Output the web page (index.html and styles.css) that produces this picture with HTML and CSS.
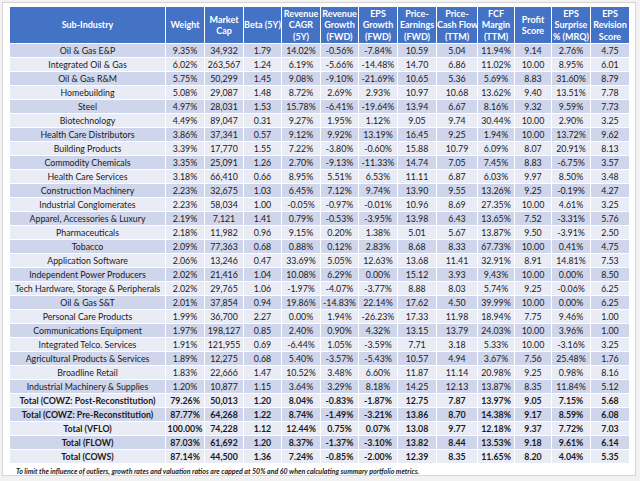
FILE: index.html
```html
<!DOCTYPE html>
<html>
<head>
<meta charset="utf-8">
<link rel="stylesheet" href="styles.css">
</head>
<body>
<div class="panel">
<table class="metrics">
<colgroup><col class="w156"><col class="w39"><col class="w39"><col class="w38"><col class="w39"><col class="w38"><col class="w39"><col class="w39"><col class="w41"><col class="w37"><col class="w37"><col class="w39"><col class="w38"></colgroup>
<thead>
<tr>
<th>Sub-Industry</th><th>Weight</th><th>Market<br>Cap</th><th>Beta (5Y)</th><th>Revenue<br>CAGR<br>(5Y)</th><th>Revenue<br>Growth<br>(FWD)</th><th>EPS<br>Growth<br>(FWD)</th><th>Price-<br>Earnings<br>(FWD)</th><th>Price-<br>Cash Flow<br>(TTM)</th><th>FCF<br>Margin<br>(TTM)</th><th>Profit<br>Score</th><th>EPS<br>Surprise<br>% (MRQ)</th><th>EPS<br>Revision<br>Score</th>
</tr>
</thead>
<tbody>
<tr><td>Oil &amp; Gas E&amp;P</td><td>9.35%</td><td>34,932</td><td>1.79</td><td>14.02%</td><td>-0.56%</td><td>-7.84%</td><td>10.59</td><td>5.04</td><td>11.94%</td><td>9.14</td><td>2.76%</td><td>4.75</td></tr>
<tr><td>Integrated Oil &amp; Gas</td><td>6.02%</td><td>263,567</td><td>1.24</td><td>6.19%</td><td>-5.66%</td><td>-14.48%</td><td>14.70</td><td>6.86</td><td>11.02%</td><td>10.00</td><td>8.95%</td><td>6.01</td></tr>
<tr><td>Oil &amp; Gas R&amp;M</td><td>5.75%</td><td>50,299</td><td>1.45</td><td>9.08%</td><td>-9.10%</td><td>-21.69%</td><td>10.65</td><td>5.36</td><td>5.69%</td><td>8.83</td><td>31.60%</td><td>8.79</td></tr>
<tr><td>Homebuilding</td><td>5.08%</td><td>29,087</td><td>1.48</td><td>8.72%</td><td>2.69%</td><td>2.93%</td><td>10.97</td><td>10.68</td><td>13.62%</td><td>9.40</td><td>13.51%</td><td>7.78</td></tr>
<tr><td>Steel</td><td>4.97%</td><td>28,031</td><td>1.53</td><td>15.78%</td><td>-6.41%</td><td>-19.64%</td><td>13.94</td><td>6.67</td><td>8.16%</td><td>9.32</td><td>9.59%</td><td>7.73</td></tr>
<tr><td>Biotechnology</td><td>4.49%</td><td>89,047</td><td>0.31</td><td>9.27%</td><td>1.95%</td><td>1.12%</td><td>9.05</td><td>9.74</td><td>30.44%</td><td>10.00</td><td>2.90%</td><td>3.25</td></tr>
<tr><td>Health Care Distributors</td><td>3.86%</td><td>37,341</td><td>0.57</td><td>9.12%</td><td>9.92%</td><td>13.19%</td><td>16.45</td><td>9.25</td><td>1.94%</td><td>10.00</td><td>13.72%</td><td>9.62</td></tr>
<tr><td>Building Products</td><td>3.39%</td><td>17,770</td><td>1.55</td><td>7.22%</td><td>-3.80%</td><td>-0.60%</td><td>15.88</td><td>10.79</td><td>6.09%</td><td>8.07</td><td>20.91%</td><td>8.13</td></tr>
<tr><td>Commodity Chemicals</td><td>3.35%</td><td>25,091</td><td>1.26</td><td>2.70%</td><td>-9.13%</td><td>-11.33%</td><td>14.74</td><td>7.05</td><td>7.45%</td><td>8.83</td><td>-6.75%</td><td>3.57</td></tr>
<tr><td>Health Care Services</td><td>3.18%</td><td>66,410</td><td>0.66</td><td>8.95%</td><td>5.51%</td><td>6.53%</td><td>11.11</td><td>6.87</td><td>6.03%</td><td>9.97</td><td>8.50%</td><td>3.48</td></tr>
<tr><td>Construction Machinery</td><td>2.23%</td><td>32,675</td><td>1.03</td><td>6.45%</td><td>7.12%</td><td>9.74%</td><td>13.90</td><td>9.55</td><td>13.26%</td><td>9.25</td><td>-0.19%</td><td>4.27</td></tr>
<tr><td>Industrial Conglomerates</td><td>2.23%</td><td>58,034</td><td>1.00</td><td>-0.05%</td><td>-0.97%</td><td>-0.01%</td><td>10.96</td><td>8.69</td><td>27.35%</td><td>10.00</td><td>4.61%</td><td>3.25</td></tr>
<tr><td>Apparel, Accessories &amp; Luxury</td><td>2.19%</td><td>7,121</td><td>1.41</td><td>0.79%</td><td>-0.53%</td><td>-3.95%</td><td>13.98</td><td>6.43</td><td>13.65%</td><td>7.52</td><td>-3.31%</td><td>5.76</td></tr>
<tr><td>Pharmaceuticals</td><td>2.18%</td><td>11,982</td><td>0.96</td><td>9.15%</td><td>0.20%</td><td>1.38%</td><td>5.01</td><td>5.67</td><td>13.87%</td><td>9.50</td><td>-3.91%</td><td>2.50</td></tr>
<tr><td>Tobacco</td><td>2.09%</td><td>77,363</td><td>0.68</td><td>0.88%</td><td>0.12%</td><td>2.83%</td><td>8.68</td><td>8.33</td><td>67.73%</td><td>10.00</td><td>0.41%</td><td>4.75</td></tr>
<tr><td>Application Software</td><td>2.06%</td><td>13,246</td><td>0.47</td><td>33.69%</td><td>5.05%</td><td>12.63%</td><td>13.68</td><td>11.41</td><td>32.91%</td><td>8.91</td><td>14.81%</td><td>7.53</td></tr>
<tr><td>Independent Power Producers</td><td>2.02%</td><td>21,416</td><td>1.04</td><td>10.08%</td><td>6.29%</td><td>0.00%</td><td>15.12</td><td>3.93</td><td>9.43%</td><td>10.00</td><td>0.00%</td><td>8.50</td></tr>
<tr><td>Tech Hardware, Storage &amp; Peripherals</td><td>2.02%</td><td>29,765</td><td>1.06</td><td>-1.97%</td><td>-4.07%</td><td>-3.77%</td><td>8.88</td><td>8.03</td><td>5.74%</td><td>9.25</td><td>-0.06%</td><td>6.25</td></tr>
<tr><td>Oil &amp; Gas S&amp;T</td><td>2.01%</td><td>37,854</td><td>0.94</td><td>19.86%</td><td>-14.83%</td><td>22.14%</td><td>17.62</td><td>4.50</td><td>39.99%</td><td>10.00</td><td>0.00%</td><td>6.25</td></tr>
<tr><td>Personal Care Products</td><td>1.99%</td><td>36,700</td><td>2.27</td><td>0.00%</td><td>1.94%</td><td>-26.23%</td><td>17.33</td><td>11.98</td><td>18.94%</td><td>7.75</td><td>9.46%</td><td>1.00</td></tr>
<tr><td>Communications Equipment</td><td>1.97%</td><td>198,127</td><td>0.85</td><td>2.40%</td><td>0.90%</td><td>4.32%</td><td>13.15</td><td>13.79</td><td>24.03%</td><td>10.00</td><td>3.96%</td><td>1.00</td></tr>
<tr><td>Integrated Telco. Services</td><td>1.91%</td><td>121,955</td><td>0.69</td><td>-6.44%</td><td>1.05%</td><td>-3.59%</td><td>7.71</td><td>3.18</td><td>5.33%</td><td>10.00</td><td>-3.16%</td><td>3.25</td></tr>
<tr><td>Agricultural Products &amp; Services</td><td>1.89%</td><td>12,275</td><td>0.68</td><td>5.40%</td><td>-3.57%</td><td>-5.43%</td><td>10.57</td><td>4.94</td><td>3.67%</td><td>7.56</td><td>25.48%</td><td>1.76</td></tr>
<tr><td>Broadline Retail</td><td>1.83%</td><td>22,666</td><td>1.47</td><td>10.52%</td><td>3.48%</td><td>6.60%</td><td>11.87</td><td>11.14</td><td>20.98%</td><td>9.25</td><td>0.98%</td><td>8.16</td></tr>
<tr><td>Industrial Machinery &amp; Supplies</td><td>1.20%</td><td>10,877</td><td>1.15</td><td>3.64%</td><td>3.29%</td><td>8.18%</td><td>14.25</td><td>12.13</td><td>13.87%</td><td>8.35</td><td>11.84%</td><td>5.12</td></tr>
<tr class="total"><td>Total (COWZ: Post-Reconstitution)</td><td>79.26%</td><td>50,013</td><td>1.20</td><td>8.04%</td><td>-0.83%</td><td>-1.87%</td><td>12.75</td><td>7.87</td><td>13.97%</td><td>9.05</td><td>7.15%</td><td>5.68</td></tr>
<tr class="total"><td>Total (COWZ: Pre-Reconstitution)</td><td>87.77%</td><td>64,268</td><td>1.22</td><td>8.74%</td><td>-1.49%</td><td>-3.21%</td><td>13.86</td><td>8.70</td><td>14.38%</td><td>9.17</td><td>8.59%</td><td>6.08</td></tr>
<tr class="total"><td>Total (VFLO)</td><td>100.00%</td><td>74,228</td><td>1.12</td><td>12.44%</td><td>0.75%</td><td>0.07%</td><td>13.08</td><td>9.77</td><td>12.18%</td><td>9.37</td><td>7.72%</td><td>7.03</td></tr>
<tr class="total"><td>Total (FLOW)</td><td>87.03%</td><td>61,692</td><td>1.20</td><td>8.37%</td><td>-1.37%</td><td>-3.10%</td><td>13.82</td><td>8.44</td><td>13.53%</td><td>9.18</td><td>9.61%</td><td>6.14</td></tr>
<tr class="total"><td>Total (COWS)</td><td>87.14%</td><td>44,500</td><td>1.36</td><td>7.24%</td><td>-0.85%</td><td>-2.00%</td><td>12.39</td><td>8.35</td><td>11.65%</td><td>8.20</td><td>4.04%</td><td>5.35</td></tr>
</tbody>
</table>
<p class="note">To limit the influence of outliers, growth rates and valuation ratios are capped at 50% and 60 when calculating summary portfolio metrics.</p>
</div>
</body>
</html>
```
FILE: styles.css
```css
html, body {
  margin: 0;
  padding: 0;
  background: #f2f2f2;
}
body {
  font-family: Lato, "Liberation Sans", sans-serif;
  color: #1a1a1a;
}
.panel {
  box-sizing: border-box;
  width: 634px;
  height: 474px;
  margin: 2px 0 0 2px;
  padding: 4px 0 0 7px;
  background: #fff;
  border: 1px solid #d6d6d6;
}
.metrics {
  width: 619px;
  table-layout: fixed;
  border-collapse: separate;
  border-spacing: 0;
  font-size: 8.8px;
}
.w156 { width: 156px; }
.w41 { width: 41px; }
.w39 { width: 39px; }
.w38 { width: 38px; }
.w37 { width: 37px; }
.metrics th,
.metrics td {
  box-sizing: border-box;
  border-right: 1px solid #fff;
  border-bottom: 1px solid #fff;
  padding: 0;
  text-align: center;
  white-space: nowrap;
}
.metrics th:last-child,
.metrics td:last-child {
  border-right: 0;
}
.metrics th {
  background: #4472c4;
  color: #fff;
  font-weight: 700;
  height: 37px;
  line-height: 11.5px;
  font-size: 9px;
}
.metrics td {
  height: 14px;
  line-height: 13px;
  overflow: hidden;
}
.metrics tbody tr:nth-child(odd) td { background: #cfd5ea; }
.metrics tbody tr:nth-child(even) td { background: #e9ebf5; }
.metrics .total td { font-weight: 700; }
.note {
  margin: 3px 0 0 6px;
  font-size: 7px;
  line-height: 9px;
  font-style: italic;
  font-weight: 700;
  color: #222;
}
```
